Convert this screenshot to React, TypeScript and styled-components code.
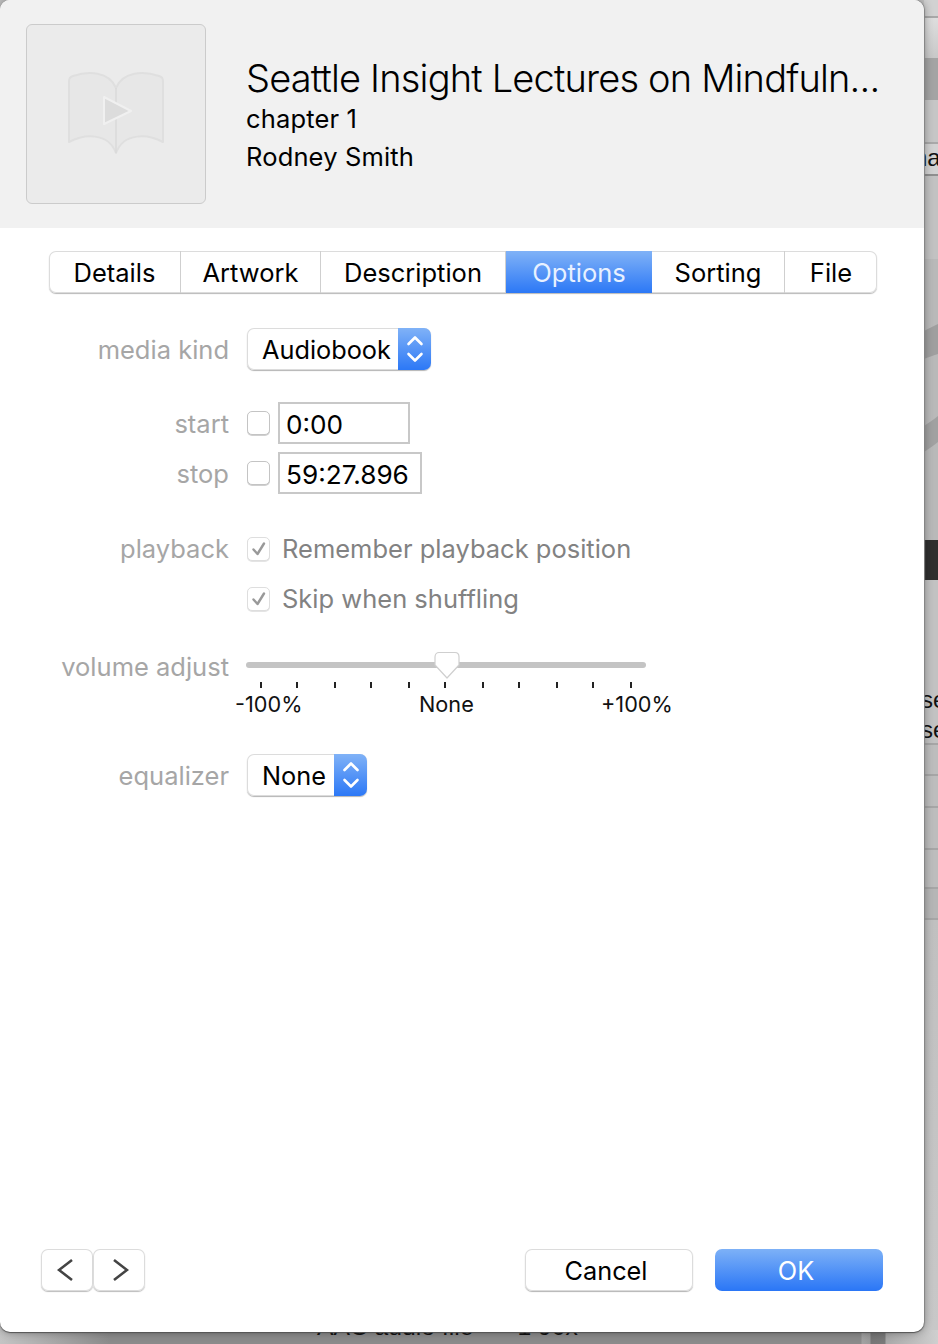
import React from "react";
import styled, { createGlobalStyle } from "styled-components";

const Global = createGlobalStyle`
  html, body { margin: 0; padding: 0; background: #bdbdbd; }
  body { font-family: Inter, "Noto Sans", "Liberation Sans", sans-serif; -webkit-font-smoothing: antialiased; }
  * { box-sizing: border-box; }
`;

const Page = styled.div`
  position: relative;
  width: 938px;
  height: 1344px;
  overflow: hidden;
  background: linear-gradient(90deg, #c4c4c4 0, #8b8b8b 110px, #8b8b8b 861px, #a2a2a2 862px, #9a9a9a 870px, #767676 871px, #7a7a7a 885px, #a8a8a8 886px, #cfcfcf 938px);
`;

const Strip = styled.div`
  position: absolute;
  left: 924px;
  top: 0;
  width: 14px;
  height: 1332px;
  display: flex;
  flex-direction: column;
  overflow: hidden;
`;

const Band = styled.div<{ $h: number; $bg: string; $line?: string }>`
  flex: none;
  height: ${(p) => p.$h}px;
  background: ${(p) => p.$bg};
  border-bottom: ${(p) => (p.$line ? `2px solid ${p.$line}` : "none")};
  font: 400 24px/1 "Liberation Sans", sans-serif;
  color: #111;
  white-space: nowrap;
  overflow: hidden;
`;

const StripWord = styled.span<{ $x: number; $pt: number }>`
  display: block;
  margin-left: ${(p) => p.$x}px;
  padding-top: ${(p) => p.$pt}px;
`;

const UnderText = styled.div`
  position: absolute;
  top: 1315px;
  left: 317px;
  display: flex;
  gap: 44px;
  font: 400 24.7px/1 "Liberation Sans", sans-serif;
  color: #111;
  white-space: nowrap;
`;

const Dialog = styled.div`
  position: relative;
  width: 924px;
  height: 1332px;
  display: flex;
  flex-direction: column;
  background: #fff;
  border-radius: 10px;
  overflow: hidden;
  box-shadow: 0 1px 1px #555, 1px 0 1px #8a8a8a;
`;

const ShadowLayer = styled.div`
  position: absolute;
  left: 0;
  top: 0;
  width: 924px;
  height: 1332px;
  border-radius: 10px;
  box-shadow: 0 0 10px rgba(0, 0, 0, 0.38);
`;

const Header = styled.header`
  flex: none;
  height: 228px;
  background: #f1f1f1;
  display: flex;
  padding: 24px 0 0 26px;
`;

const Art = styled.div`
  flex: none;
  width: 180px;
  height: 180px;
  background: #ebebeb;
  border: 1px solid #cbcbcb;
  border-radius: 6px;
  display: flex;
  align-items: center;
  justify-content: center;
`;

const Meta = styled.div`
  margin-left: 40px;
  padding-top: 32px;
  display: flex;
  flex-direction: column;
  color: #000;
`;

const Title = styled.div`
  font-size: 38px;
  font-weight: 300;
  line-height: 44px;
  letter-spacing: -0.82px;
  white-space: nowrap;
`;

const Sub = styled.div`
  font-size: 25.5px;
  font-weight: 400;
  line-height: 38px;
  letter-spacing: 0.15px;
  white-space: nowrap;
`;

const Tabs = styled.nav`
  display: flex;
  margin: 23px 0 0 49px;
  width: 828px;
  height: 42px;
  background: #fff;
  border-radius: 7px;
  box-shadow: 0 0 0 1px #dcdcdc inset, 0 1px 1px #b8b8b8;
  overflow: hidden;
`;

const Tab = styled.div<{ $w: number; $on?: boolean; $last?: boolean }>`
  flex: none;
  width: ${(p) => p.$w}px;
  height: 42px;
  display: flex;
  align-items: center;
  justify-content: center;
  font-size: 25.5px;
  color: ${(p) => (p.$on ? "#e8f1ff" : "#000")};
  background: ${(p) => (p.$on ? "linear-gradient(180deg, #80b2f7, #2c78f6)" : "transparent")};
  border-right: ${(p) => (p.$on || p.$last ? "none" : "1px solid #cfcfcf")};
`;

const Form = styled.div`
  display: flex;
  flex-direction: column;
  padding-top: 35px;
`;

const Row = styled.div<{ $mt?: number; $h: number; $start?: boolean }>`
  display: flex;
  align-items: ${(p) => (p.$start ? "flex-start" : "center")};
  height: ${(p) => p.$h}px;
  margin-top: ${(p) => p.$mt ?? 0}px;
`;

const Label = styled.div<{ $low?: boolean }>`
  flex: none;
  width: 229px;
  text-align: right;
  font-size: 25.5px;
  line-height: 32px;
  color: #a6a6a6;
  margin-right: 18px;
  padding-top: ${(p) => (p.$low ? 2 : 0)}px;
  white-space: nowrap;
`;

const Select = styled.div<{ $w: number }>`
  width: ${(p) => p.$w}px;
  height: 42px;
  display: flex;
  justify-content: space-between;
  background: #fff;
  border-radius: 7px;
  box-shadow: 0 0 0 1px #dcdcdc inset, 0 1px 1px #b4b4b4;
  overflow: hidden;
  font-size: 25.3px;
  color: #000;
`;

const SelectText = styled.span`
  padding-left: 15px;
  line-height: 44px;
  white-space: nowrap;
`;

const Stepper = styled.div`
  flex: none;
  width: 33px;
  height: 42px;
  display: flex;
  align-items: center;
  justify-content: center;
  background: linear-gradient(180deg, #80b2f7, #2c78f6);
`;

const Check = styled.div<{ $soft?: boolean }>`
  flex: none;
  width: 23px;
  height: 24px;
  border-radius: 5px;
  background: #fff;
  border: 1px solid ${(p) => (p.$soft ? "#dedede" : "#c4c4c4")};
  box-shadow: 0 1px 0 ${(p) => (p.$soft ? "#e4e4e4" : "#d0d0d0")};
  display: flex;
  align-items: center;
  justify-content: center;
`;

const TimeInput = styled.div<{ $w: number }>`
  width: ${(p) => p.$w}px;
  height: 42px;
  margin-left: 8px;
  border: 2px solid #c8c8c8;
  background: #fff;
  padding-left: 6px;
  font-size: 26.2px;
  line-height: 42px;
  color: #000;
  white-space: nowrap;
`;

const CheckText = styled.span`
  margin-left: 12px;
  padding-bottom: 2px;
  font-size: 25.5px;
  color: #828282;
  white-space: nowrap;
`;

const Slider = styled.div`
  width: 440px;
  margin-left: -12px;
  padding-top: 8px;
  display: flex;
  flex-direction: column;
`;

const TrackArea = styled.div`
  position: relative;
  margin-left: 11px;
  width: 400px;
  height: 23px;
  display: flex;
  align-items: flex-start;
`;

const Track = styled.div`
  width: 400px;
  height: 6px;
  margin-top: 3px;
  border-radius: 3px;
  background: #c4c4c4;
`;

const Thumb = styled.svg`
  position: absolute;
  left: 188px;
  top: -8px;
`;

const Ticks = styled.div`
  position: relative;
  margin-left: 11px;
  width: 400px;
  height: 6px;
`;

const Tick = styled.span<{ $x: number }>`
  position: absolute;
  left: ${(p) => p.$x}px;
  top: 0;
  width: 2px;
  height: 6px;
  background: #222;
`;

const Scale = styled.div`
  display: flex;
  margin-top: 3px;
  width: 450px;
  font-size: 21.7px;
  line-height: 26px;
  color: #111;
`;

const ScaleText = styled.span<{ $w: number }>`
  flex: none;
  width: ${(p) => p.$w}px;
  white-space: nowrap;
`;

const Footer = styled.footer`
  margin-top: auto;
  height: 83px;
  display: flex;
  padding-left: 41px;
`;

const NavButton = styled.div<{ $dir: "prev" | "next" }>`
  width: 52px;
  height: 42px;
  display: flex;
  align-items: center;
  justify-content: center;
  padding: ${(p) => (p.$dir === "prev" ? "0 4px 0 0" : "0 0 0 4px")};
  background: #fff;
  border-radius: 7px;
  box-shadow: 0 0 0 1px #dcdcdc inset, 0 1px 1px #bcbcbc;
`;

const Actions = styled.div`
  margin-left: 380px;
  display: flex;
  gap: 22px;
`;

const Action = styled.div<{ $primary?: boolean }>`
  width: 168px;
  height: 42px;
  display: flex;
  align-items: center;
  justify-content: center;
  padding-right: 6px;
  border-radius: 7px;
  font-size: 25.3px;
  color: ${(p) => (p.$primary ? "#fff" : "#000")};
  background: ${(p) => (p.$primary ? "linear-gradient(180deg, #7db1f7, #2a76f6)" : "#fff")};
  box-shadow: ${(p) => (p.$primary ? "none" : "0 0 0 1px #dcdcdc inset, 0 1px 1px #b4b4b4")};
`;

const Updown = () => (
  <svg width="18" height="28" viewBox="0 0 18 28" fill="none" stroke="#fff" strokeWidth="2.6" strokeLinecap="round" strokeLinejoin="round">
    <path d="M2.5 9 L9 2.5 L15.5 9" />
    <path d="M2.5 19 L9 25.5 L15.5 19" />
  </svg>
);

const Tickmark = () => (
  <svg width="16" height="16" viewBox="0 0 16 16" fill="none" stroke="#999" strokeWidth="2.4" strokeLinecap="round" strokeLinejoin="round">
    <path d="M2.5 8.5 L6.5 13 L13 2.5" />
  </svg>
);

const Book = () => (
  <svg width="96" height="84" viewBox="0 0 96 84">
    <path
      d="M1 10 C1 6 2 5 5 4 C20 -1 41 -1 48 16 C55 -1 76 -1 91 4 C94 5 95 6 95 10 L95 70 C80 62 56 60 48 81 C40 60 16 62 1 70 Z"
      fill="#e7e7e7"
      stroke="#dfdfdf"
      strokeWidth="2"
      strokeLinejoin="round"
    />
    <path d="M48 16 L48 81" stroke="#dadada" strokeWidth="1.5" />
    <path d="M36 25 L63 39 L36 52 Z" fill="#dcdcdc" stroke="#f0f0f0" strokeWidth="2" strokeLinejoin="round" />
  </svg>
);

const ticks = [14, 50, 88, 124, 162, 198, 236, 272, 310, 346, 384];

export default function App() {
  return (
    <Page>
      <Global />
      <Strip>
        <Band $h={18} $bg="#d2d2d2" $line="#a8a8a8" />
        <Band $h={40} $bg="linear-gradient(180deg,#dedede,#c8c8c8)" />
        <Band $h={42} $bg="#a4a4a4" />
        <Band $h={44} $bg="#c6c6c6" $line="#a9a9a9" />
        <Band $h={32} $bg="#d2d2d2" $line="#8f8f8f">
          <StripWord $x={-10} $pt={2}>na</StripWord>
        </Band>
        <Band $h={83} $bg="#c2c2c2" />
        <Band $h={281} $bg="#b9b9b9">
          <svg width="14" height="281" viewBox="0 0 14 281">
            <path d="M0 72 C5 69 10 67 14 65 L14 95 C10 96 5 98 0 100 Z" fill="#9f9f9f" />
            <path d="M0 167 C5 164 10 160 14 157 L14 183 C10 186 5 190 0 193 Z" fill="#a1a1a1" />
          </svg>
        </Band>
        <Band $h={40} $bg="#2f2f2f" />
        <Band $h={102} $bg="#c2c2c2" />
        <Band $h={30} $bg="#c2c2c2">
          <StripWord $x={-3} $pt={6}>se</StripWord>
        </Band>
        <Band $h={33} $bg="#c2c2c2" $line="#a6a6a6">
          <StripWord $x={-3} $pt={6}>se</StripWord>
        </Band>
        <Band $h={31} $bg="#bdbdbd" $line="#a6a6a6" />
        <Band $h={32} $bg="#bdbdbd" $line="#a6a6a6" />
        <Band $h={42} $bg="#bdbdbd" $line="#a6a6a6" />
        <Band $h={39} $bg="#bdbdbd" $line="#a6a6a6" />
        <Band $h={31} $bg="#b6b6b6" $line="#a6a6a6" />
        <Band $h={410} $bg="linear-gradient(180deg,#c0c0c0,#c8c8c8)" />
      </Strip>
      <UnderText>
        <span>AAC audio file</span>
        <span>1 90x</span>
      </UnderText>
      <ShadowLayer />
      <Dialog>
        <Header>
          <Art>
            <Book />
          </Art>
          <Meta>
            <Title>Seattle Insight Lectures on Mindfuln...</Title>
            <Sub>chapter 1</Sub>
            <Sub>Rodney Smith</Sub>
          </Meta>
        </Header>
        <Tabs>
          <Tab $w={132}>Details</Tab>
          <Tab $w={140}>Artwork</Tab>
          <Tab $w={185}>Description</Tab>
          <Tab $w={146} $on>Options</Tab>
          <Tab $w={133}>Sorting</Tab>
          <Tab $w={92} $last>File</Tab>
        </Tabs>
        <Form>
          <Row $h={42}>
            <Label $low>media kind</Label>
            <Select $w={184}>
              <SelectText>Audiobook</SelectText>
              <Stepper><Updown /></Stepper>
            </Select>
          </Row>
          <Row $h={42} $mt={32}>
            <Label $low>start</Label>
            <Check />
            <TimeInput $w={132}>0:00</TimeInput>
          </Row>
          <Row $h={42} $mt={8}>
            <Label $low>stop</Label>
            <Check />
            <TimeInput $w={144}>59:27.896</TimeInput>
          </Row>
          <Row $h={42} $mt={34}>
            <Label>playback</Label>
            <Check $soft><Tickmark /></Check>
            <CheckText>Remember playback position</CheckText>
          </Row>
          <Row $h={42} $mt={8}>
            <Label />
            <Check $soft><Tickmark /></Check>
            <CheckText>Skip when shuffling</CheckText>
          </Row>
          <Row $h={64} $mt={31} $start>
            <Label>volume adjust</Label>
            <Slider>
              <TrackArea>
                <Track />
                <Thumb width="26" height="28" viewBox="0 0 26 28">
                  <path
                    d="M1 6 C1 3 3 1.500 5 1.500 L21 1.500 C23 1.500 25 3 25 6 L25 14 L13 27 L1 14 Z"
                    fill="#fff"
                    stroke="#cfcfcf"
                    strokeWidth="1.2"
                    strokeLinejoin="round"
                  />
                </Thumb>
              </TrackArea>
              <Ticks>
                {ticks.map((x) => (
                  <Tick key={x} $x={x} />
                ))}
              </Ticks>
              <Scale>
                <ScaleText $w={184}>-100%</ScaleText>
                <ScaleText $w={182}>None</ScaleText>
                <ScaleText $w={80}>+100%</ScaleText>
              </Scale>
            </Slider>
          </Row>
          <Row $h={42} $mt={39}>
            <Label $low>equalizer</Label>
            <Select $w={120}>
              <SelectText>None</SelectText>
              <Stepper><Updown /></Stepper>
            </Select>
          </Row>
        </Form>
        <Footer>
          <NavButton $dir="prev">
            <svg width="16" height="24" viewBox="0 0 16 24" fill="none" stroke="#444" strokeWidth="2.6">
              <path d="M15 2 L2 12 L15 22" />
            </svg>
          </NavButton>
          <NavButton $dir="next">
            <svg width="16" height="24" viewBox="0 0 16 24" fill="none" stroke="#444" strokeWidth="2.6">
              <path d="M1 2 L14 12 L1 22" />
            </svg>
          </NavButton>
          <Actions>
            <Action>Cancel</Action>
            <Action $primary>OK</Action>
          </Actions>
        </Footer>
      </Dialog>
    </Page>
  );
}
